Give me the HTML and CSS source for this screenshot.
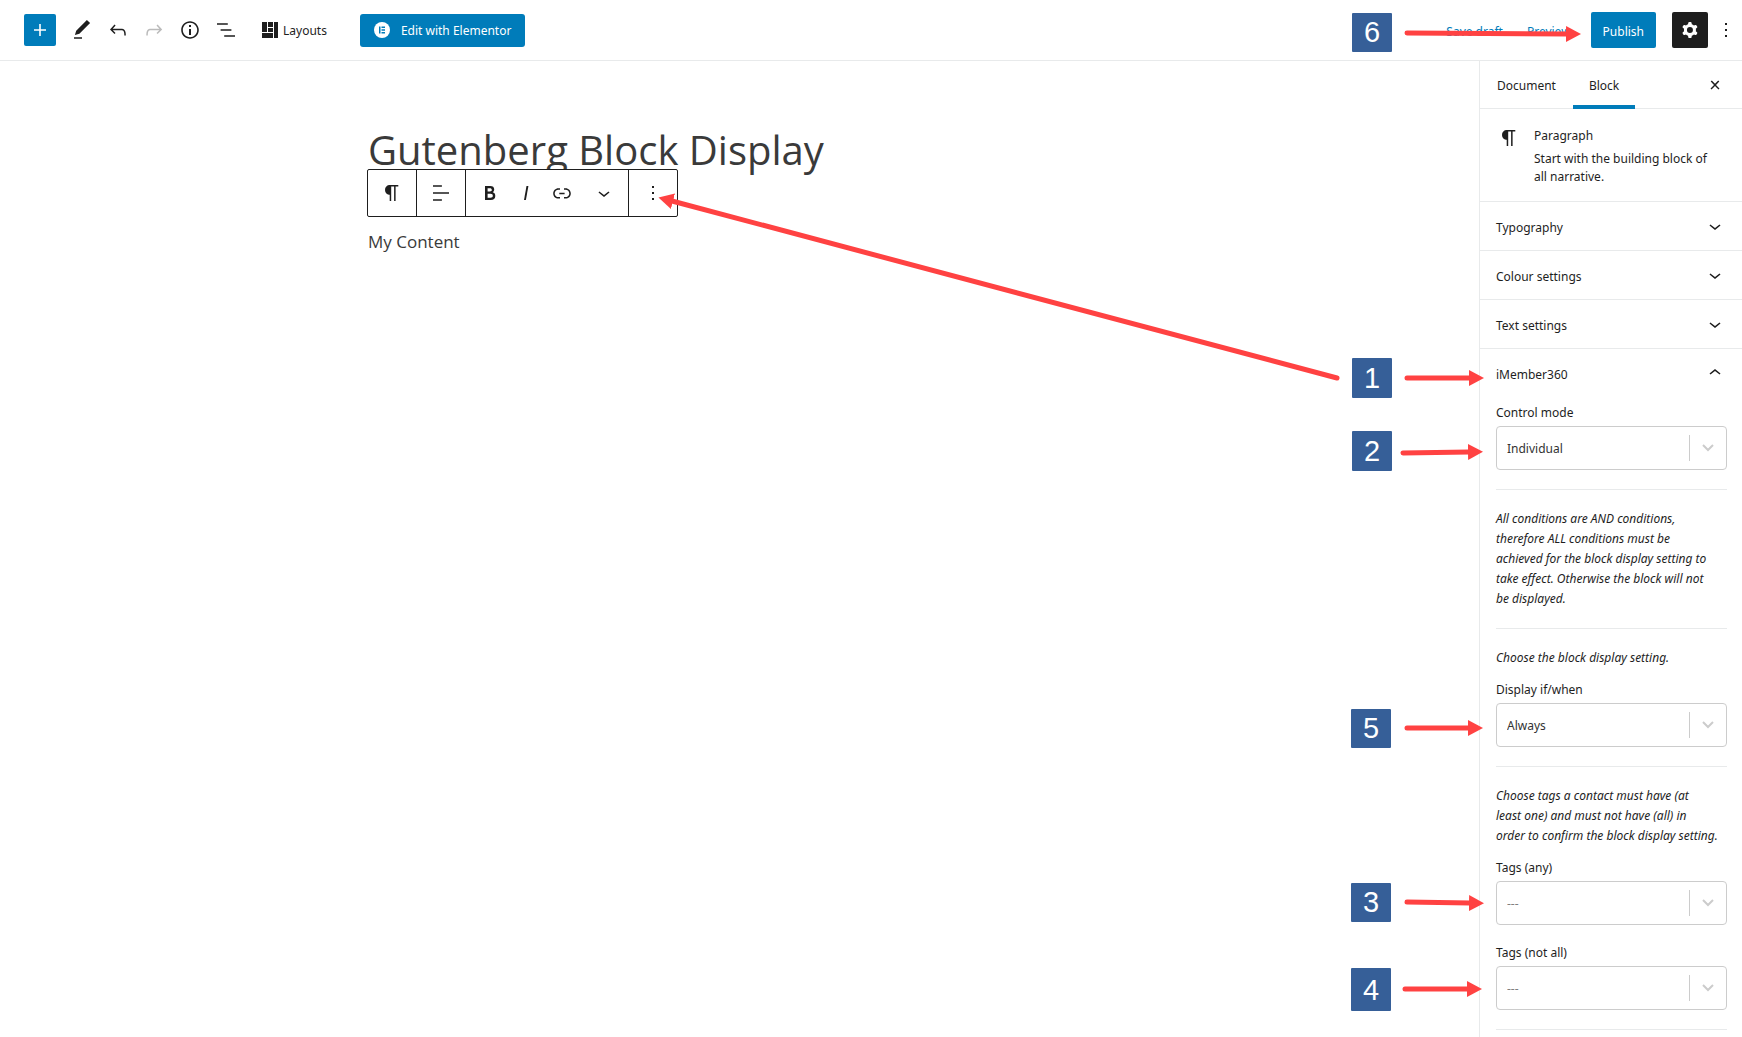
FILE: index.html
```
<!DOCTYPE html>
<html lang="en">
<head>
  <meta charset="UTF-8" />
  <meta name="viewport" content="width=device-width, initial-scale=1" />
  <title>Gutenberg Block Display</title>
  <link rel="stylesheet" href="styles.css">
</head>
<body>
  <header class="topbar">
    <div class="tools">
      <button class="icon-btn add" aria-label="Add block"><svg viewBox="0 0 24 24"><path d="M18 11.2h-5.2V6h-1.6v5.2H6v1.6h5.2V18h1.6v-5.2H18z"/></svg></button>
      <button class="icon-btn" aria-label="Tools"><svg viewBox="0 0 24 24"><path d="M20.1 5.1L16.9 2 6.2 12.7l-1.3 4.4 4.5-1.3L20.1 5.1zM4 20.8h8v-1.5H4v1.5z"/></svg></button>
      <button class="icon-btn" aria-label="Undo"><svg viewBox="0 0 24 24"><path d="M18.3 11.7c-.6-.6-1.4-.9-2.3-.9H6.7l2.9-3.3-1.1-1-4.5 5L8.5 16l1-1-2.7-2.7H16c.5 0 .9.2 1.3.5 1 1 1 3.4 1 4.5v.3h1.5v-.2c0-1.5 0-4.3-1.5-5.7z"/></svg></button>
      <button class="icon-btn off" aria-label="Redo"><svg viewBox="0 0 24 24"><path d="M15.6 6.5l-1.1 1 2.9 3.3H8c-.9 0-1.7.3-2.3.9-1.4 1.5-1.4 4.2-1.4 5.6v.2h1.5v-.3c0-1.1 0-3.5 1-4.5.3-.3.7-.5 1.3-.5h9.2L14.5 15l1.1 1.1 4.6-4.6-4.6-5z"/></svg></button>
      <button class="icon-btn" aria-label="Details"><svg viewBox="0 0 24 24"><path d="M12 3.2c-4.8 0-8.8 3.9-8.8 8.8 0 4.8 3.9 8.8 8.8 8.8 4.8 0 8.8-3.9 8.8-8.8 0-4.8-4-8.8-8.8-8.8zm0 16c-4 0-7.2-3.3-7.2-7.2C4.8 8 8 4.8 12 4.8s7.2 3.3 7.2 7.2c0 4-3.2 7.2-7.2 7.2zM11 17h2v-6h-2v6zm0-8h2V7h-2v2z"/></svg></button>
      <button class="icon-btn" aria-label="Outline"><svg viewBox="0 0 24 24"><path d="M13.8 5.2H3v1.5h10.8V5.2zm-3.6 12v1.5H21v-1.5H10.2zm7.2-6H6.6v1.5h10.8v-1.5z"/></svg></button>
    </div>
    <button class="layouts"><svg viewBox="0 0 16 16"><path d="M0 0h5v10H0zM6 0h5v5H6zM12 0h4v16h-4zM6 6h5v4H6zM0 11h11v5H0z"/></svg>Layouts</button>
    <button class="elementor"><svg viewBox="0 0 16 16"><circle cx="8" cy="8" r="8" fill="#fff"/><path d="M5 4.500h1.500v7H5zM7.500 4.500H11V6H7.500zM7.500 7.300H11v1.400H7.500zM7.500 10H11v1.500H7.500z" fill="#007cba"/></svg>Edit with Elementor</button>
    <div class="actions">
      <a href="#">Save draft</a>
      <a href="#">Preview</a>
      <button class="publish">Publish</button>
      <button class="settings" aria-label="Settings"><svg viewBox="0 0 24 24"><path fill-rule="evenodd" d="M10.289 4.836A1 1 0 0111.275 4h1.306a1 1 0 01.987.836l.244 1.466c.787.26 1.503.679 2.108 1.218l1.393-.522a1 1 0 011.216.437l.653 1.130a1 1 0 01-.23 1.273l-1.148.944a6.025 6.025 0 010 2.435l1.149.946a1 1 0 01.23 1.272l-.653 1.130a1 1 0 01-1.216.437l-1.394-.522c-.605.54-1.320.958-2.108 1.218l-.244 1.466a1 1 0 01-.987.836h-1.306a1 1 0 01-.986-.836l-.244-1.466a5.995 5.995 0 01-2.108-1.218l-1.394.522a1 1 0 01-1.217-.436l-.653-1.131a1 1 0 01.23-1.272l1.149-.946a6.026 6.026 0 010-2.435l-1.148-.944a1 1 0 01-.23-1.272l.653-1.131a1 1 0 011.217-.437l1.393.522a5.994 5.994 0 012.108-1.218l.244-1.466zM14.929 12a3 3 0 11-6 0 3 3 0 016 0z"/></svg></button>
      <button class="more" aria-label="Options"><svg viewBox="0 0 24 24"><path d="M13 19h-2v-2h2v2zm0-6h-2v-2h2v2zm0-6h-2V5h2v2z"/></svg></button>
    </div>
  </header>

  <div class="workspace">
    <main class="editor">
      <div class="content">
        <h1>Gutenberg Block Display</h1>
        <div class="block">
          <div class="toolbar">
            <div class="group"><button aria-label="Paragraph"><svg viewBox="0 0 24 24"><path d="M18.300 4H9.900v-.1l-.9.200c-2.300.4-4 2.400-4 4.800s1.700 4.400 4 4.800l.7.100V20h1.500V5.500h2.900V20h1.500V5.500h2.700V4z"/></svg></button></div>
            <div class="group"><button aria-label="Align"><svg viewBox="0 0 24 24"><path d="M4 19.800h8.900v-1.500H4v1.500zm8.900-15.600H4v1.500h8.900V4.200zm-8.900 7v1.500h16v-1.500H4z"/></svg></button></div>
            <div class="group format">
              <button aria-label="Bold"><svg viewBox="0 0 24 24"><path d="M14.700 11.300c1-.6 1.500-1.600 1.500-3 0-2.300-1.300-3.400-4-3.400H7v14h5.800c1.400 0 2.500-.3 3.300-1 .8-.7 1.200-1.700 1.200-2.900.1-1.900-.8-3.100-2.600-3.700zm-5.100-4h2.300c.6 0 1.100.1 1.400.4.3.3.5.7.5 1.200s-.2 1-.5 1.200c-.3.3-.8.4-1.400.4H9.600V7.300zm4.600 9c-.4.3-1 .4-1.700.4H9.600v-3.900h2.900c.7 0 1.300.2 1.700.5.4.3.6.8.6 1.500s-.2 1.200-.6 1.500z"/></svg></button>
              <button aria-label="Italic"><svg viewBox="0 0 24 24"><path d="M12.500 5L10 19h1.900l2.500-14z"/></svg></button>
              <button aria-label="Link"><svg viewBox="0 0 24 24"><path d="M15.600 7.200H14v1.500h1.600c2 0 3.700 1.700 3.700 3.700s-1.700 3.700-3.700 3.700H14v1.500h1.600c2.800 0 5.200-2.300 5.200-5.200 0-2.900-2.300-5.200-5.200-5.200zM4.700 12.400c0-2 1.700-3.700 3.700-3.700H10V7.200H8.400c-2.900 0-5.200 2.300-5.200 5.200 0 2.900 2.300 5.200 5.200 5.200H10v-1.500H8.400c-2 0-3.700-1.700-3.700-3.700zm4.600.9h5.300v-1.500H9.300v1.500z"/></svg></button>
              <button class="wide" aria-label="More formatting"><svg viewBox="0 0 24 24"><path d="M17.500 11.600L12 16l-5.500-4.400.9-1.200L12 14l4.500-3.600 1 1.200z"/></svg></button>
            </div>
            <div class="group"><button aria-label="Block options"><svg viewBox="0 0 24 24"><path d="M13 19h-2v-2h2v2zm0-6h-2v-2h2v2zm0-6h-2V5h2v2z"/></svg></button></div>
          </div>
          <p>My Content</p>
        </div>
      </div>
    </main>

    <aside class="sidebar">
      <div class="tabs">
        <button class="tab">Document</button>
        <button class="tab active">Block</button>
        <button class="close" aria-label="Close settings"><svg viewBox="0 0 24 24"><path d="M13 11.900l3.300-3.400-1.100-1-3.200 3.300-3.200-3.300-1.100 1 3.300 3.400-3.500 3.600 1 1L12 13l3.500 3.500 1-1z"/></svg></button>
      </div>

      <section class="card">
        <svg viewBox="0 0 24 24"><path d="M18.300 4H9.900v-.1l-.9.200c-2.300.4-4 2.400-4 4.800s1.700 4.400 4 4.800l.7.100V20h1.500V5.500h2.900V20h1.500V5.500h2.700V4z"/></svg>
        <div>
          <h2>Paragraph</h2>
          <p>Start with the building block of all narrative.</p>
        </div>
      </section>

      <button class="panel">Typography<svg viewBox="0 0 24 24"><path d="M17.500 11.600L12 16l-5.500-4.400.9-1.200L12 14l4.500-3.600 1 1.200z"/></svg></button>
      <button class="panel">Colour settings<svg viewBox="0 0 24 24"><path d="M17.500 11.600L12 16l-5.500-4.400.9-1.200L12 14l4.500-3.600 1 1.200z"/></svg></button>
      <button class="panel">Text settings<svg viewBox="0 0 24 24"><path d="M17.500 11.600L12 16l-5.500-4.400.9-1.200L12 14l4.500-3.600 1 1.200z"/></svg></button>
      <button class="panel">iMember360<svg viewBox="0 0 24 24"><path d="M6.500 12.400L12 8l5.500 4.400-.9 1.200L12 10l-4.500 3.600-1-1.200z"/></svg></button>

      <div class="fields">
        <label for="mode">Control mode</label>
        <div class="select">
          <select id="mode"><option>Individual</option></select>
          <svg viewBox="0 0 12 8"><path d="M1 1l5 5 5-5"/></svg>
        </div>
        <hr>
        <p class="help">All conditions are AND conditions,<br>therefore ALL conditions must be<br>achieved for the block display setting to<br>take effect. Otherwise the block will not<br>be displayed.</p>
        <hr>
        <p class="help">Choose the block display setting.</p>
        <label for="display">Display if/when</label>
        <div class="select">
          <select id="display"><option>Always</option></select>
          <svg viewBox="0 0 12 8"><path d="M1 1l5 5 5-5"/></svg>
        </div>
        <hr>
        <p class="help">Choose tags a contact must have (at<br>least one) and must not have (all) in<br>order to confirm the block display setting.</p>
        <label for="tags-any">Tags (any)</label>
        <div class="select">
          <select id="tags-any" class="empty"><option>---</option></select>
          <svg viewBox="0 0 12 8"><path d="M1 1l5 5 5-5"/></svg>
        </div>
        <label for="tags-not" class="next">Tags (not all)</label>
        <div class="select">
          <select id="tags-not" class="empty"><option>---</option></select>
          <svg viewBox="0 0 12 8"><path d="M1 1l5 5 5-5"/></svg>
        </div>
        <hr>
      </div>
    </aside>
  </div>

  <!-- numbered steps and arrows, kept to the right edge like the sidebar -->
  <svg class="steps" viewBox="0 0 1742 1037">
    <defs>
      <marker id="head" markerUnits="userSpaceOnUse" markerWidth="16" markerHeight="16" refX="1" refY="8" orient="auto"><path d="M0 0l15 8-15 8z"/></marker>
    </defs>
    <g class="arrows">
      <path d="M1337 378L672 201"/>
      <path d="M1407 33L1567 34"/>
      <path d="M1407 378H1470"/>
      <path d="M1403 453L1469 452"/>
      <path d="M1407 728H1469"/>
      <path d="M1407 902L1470 903"/>
      <path d="M1405 989H1468"/>
    </g>
    <g class="badges">
      <rect x="1352" y="13" width="40" height="39" rx="1"/><text x="1372" y="42">6</text>
      <rect x="1352" y="358" width="40" height="40" rx="1"/><text x="1372" y="388">1</text>
      <rect x="1352" y="431" width="40" height="40" rx="1"/><text x="1372" y="461">2</text>
      <rect x="1351" y="709" width="40" height="39" rx="1"/><text x="1371" y="738">5</text>
      <rect x="1351" y="883" width="40" height="39" rx="1"/><text x="1371" y="912">3</text>
      <rect x="1351" y="968" width="40" height="43" rx="1"/><text x="1371" y="1000">4</text>
    </g>
  </svg>
</body>
</html>
```
FILE: styles.css
```
* {
  box-sizing: border-box;
}
body {
  margin: 0;
  position: relative;
  overflow: hidden;
  background: #fff;
  color: #1e1e1e;
  font-family: "Noto Sans", "Open Sans", sans-serif;
  font-size: 12px;
  line-height: 18px;
}
h1, h2, p {
  margin: 0;
  font-weight: normal;
}
button {
  display: flex;
  align-items: center;
  justify-content: center;
  padding: 0;
  border: 0;
  background: none;
  color: inherit;
  font: inherit;
}
svg {
  flex: none;
  width: 24px;
  height: 24px;
  fill: currentColor;
}

/* top bar */
.topbar {
  display: flex;
  align-items: center;
  height: 61px;
  padding: 0 4px 0 24px;
  border-bottom: 1px solid #e8eaeb;
}
.tools {
  display: flex;
  gap: 4px;
}
.icon-btn {
  width: 32px;
  height: 32px;
}
.add {
  margin-right: 6px;
  border-radius: 2px;
  background: #007cba;
  color: #fff;
}
.off {
  color: #bbb;
}
.layouts {
  gap: 5px;
  margin-left: 20px;
  padding-top: 2px;
}
.layouts svg, .elementor svg {
  width: 16px;
  height: 16px;
  margin-bottom: 2px;
}
.elementor {
  gap: 11px;
  height: 33px;
  margin-left: 33px;
  padding: 2px 14px 0;
  border-radius: 3px;
  background: #007cba;
  color: #fff;
}
.actions {
  display: flex;
  align-items: center;
  margin-left: auto;
}
.actions a {
  margin-right: 24px;
  padding-top: 3px;
  color: #007cba;
  text-decoration: none;
}
.actions a + a {
  margin-right: 20px;
}
.publish {
  height: 36px;
  padding: 3px 12px 0;
  border-radius: 2px;
  background: #007cba;
  color: #fff;
}
.settings {
  width: 36px;
  height: 36px;
  margin: 0 6px 0 16px;
  border-radius: 2px;
  background: #1e1e1e;
  color: #fff;
}

/* editor */
.workspace {
  display: flex;
}
.editor {
  flex: 1;
}
.content {
  max-width: 743px;
  margin: 0 auto;
  padding-top: 61px;
  color: #3a3a3a;
  font-family: "Open Sans", sans-serif;
}
h1 {
  font-size: 40px;
  line-height: 56px;
}
.block {
  position: relative;
  margin-top: 51px;
  font-size: 17px;
  line-height: 26px;
}
.toolbar {
  position: absolute;
  bottom: 38px;
  left: -1px;
  display: flex;
  border: 1px solid #1e1e1e;
  border-radius: 2px;
  background: #fff;
  color: #1e1e1e;
}
.group {
  display: flex;
}
.group + .group {
  border-left: 1px solid #1e1e1e;
}
.group button {
  width: 48px;
  height: 46px;
}
.format {
  padding-left: 6px;
}
.format button {
  width: 36px;
}
.format .wide {
  width: 48px;
}

/* sidebar */
.sidebar {
  flex: none;
  width: 263px;
  border-left: 1px solid #e8eaeb;
}
.tabs {
  display: flex;
  gap: 1px;
  height: 48px;
  padding: 0 15px 0 1px;
  border-bottom: 1px solid #e8eaeb;
}
.tab {
  height: 48px;
  padding: 2px 16px 0;
}
.active {
  box-shadow: inset 0 -4px #007cba;
}
.close {
  margin-left: auto;
}
.card {
  display: flex;
  gap: 13px;
  padding: 17px 20px 15px 17px;
}
.card h2 {
  margin-bottom: 4px;
  font-size: 12px;
  line-height: 20px;
}
.panel {
  justify-content: space-between;
  width: 100%;
  height: 49px;
  padding: 3px 15px 0 16px;
  border-top: 1px solid #e8eaeb;
}
.panel svg {
  margin-bottom: 4px;
}
.fields {
  padding: 6px 15px 0 16px;
}
label {
  display: block;
  line-height: 20px;
  margin-bottom: 3px;
}
.select {
  position: relative;
}
select {
  appearance: none;
  display: block;
  width: 100%;
  height: 44px;
  padding: 2px 40px 0 10px;
  border: 1px solid #ccc;
  border-radius: 4px;
  background: #fff;
  color: #333;
  font: inherit;
}
.empty {
  color: #808080;
}
.select::after {
  content: "";
  position: absolute;
  top: 9px;
  right: 37px;
  width: 1px;
  height: 26px;
  background: #ccc;
}
.select svg {
  position: absolute;
  top: 18px;
  right: 13px;
  width: 12px;
  height: 8px;
  fill: none;
  stroke: #ccc;
  stroke-width: 2;
}
hr {
  height: 1px;
  margin: 19px 0;
  border: 0;
  background: #e8eaeb;
}
.help {
  margin: 0 0 12px;
  font-style: italic;
  line-height: 20px;
}
.next {
  margin-top: 18px;
}

/* steps */
.steps {
  position: absolute;
  top: 0;
  right: 0;
  width: 1742px;
  height: 1037px;
  pointer-events: none;
}
.arrows path {
  fill: none;
  stroke: #ff4242;
  stroke-width: 5;
  stroke-linecap: round;
  marker-end: url(#head);
}
#head path {
  fill: #ff4242;
  stroke: none;
  marker-end: none;
}
.badges rect {
  fill: #365f98;
}
.badges text {
  fill: #fff;
  font-family: "Liberation Sans", sans-serif;
  font-size: 29px;
  text-anchor: middle;
}
```
